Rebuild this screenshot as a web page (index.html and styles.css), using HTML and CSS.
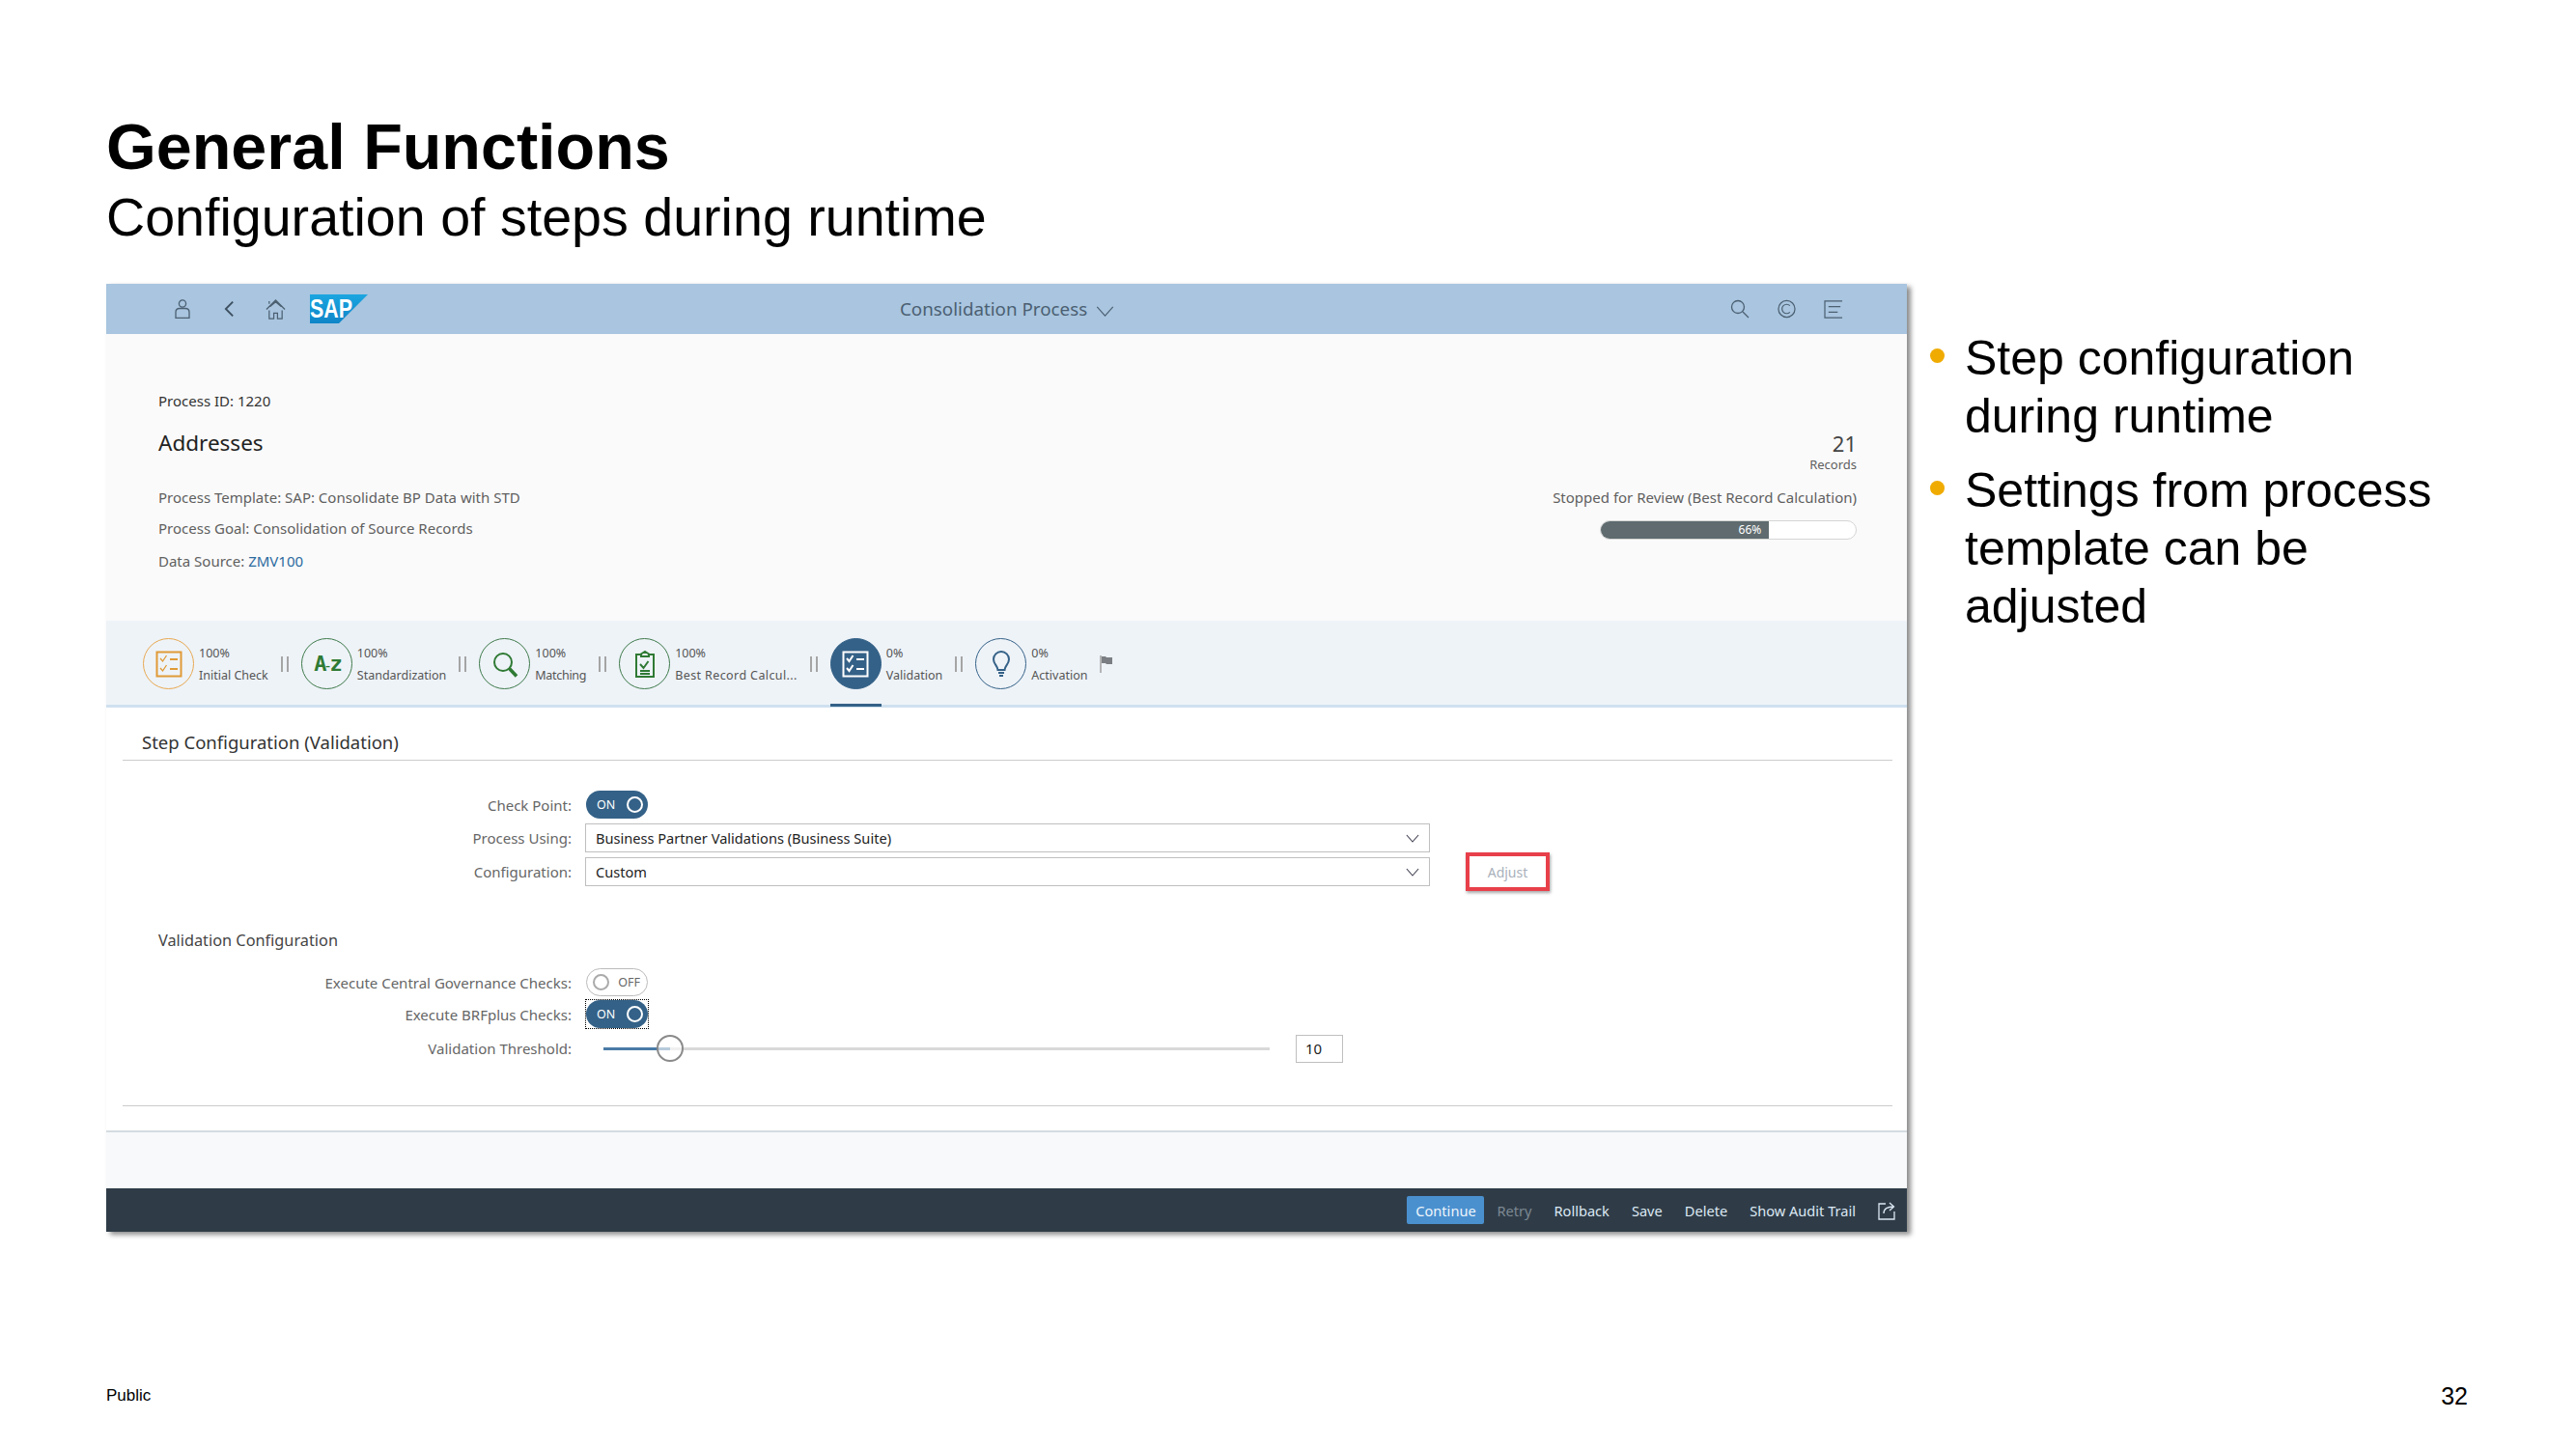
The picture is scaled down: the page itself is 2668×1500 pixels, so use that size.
FILE: index.html
```html
<!DOCTYPE html>
<html lang="en">
<head>
    <meta charset="UTF-8">
    <title>General Functions</title>
    <link rel="stylesheet" href="styles.css">
</head>
<body>
    <div class="slide">
        <h1 class="slide-title">General Functions</h1>
        <p class="slide-subtitle">Configuration of steps during runtime</p>

        <div class="content">
            <div class="panel">
                <div class="shell">
                    <div class="shell-left">
                        <svg class="shell-icon person" viewBox="0 0 16 20"><circle cx="8" cy="4.5" r="3.6"/><path d="M1 19.5v-6q0-4 4-4h6q4 0 4 4v6z"/></svg>
                        <svg class="shell-icon back" viewBox="0 0 12 20"><path d="M10 2L2 10l8 8"/></svg>
                        <svg class="shell-icon home" viewBox="0 0 22 22"><path d="M1 11L11 1l10 10M4 5V2M4 12v9h5v-6h4v6h5v-9M5 8l6-5 6 5"/></svg>
                        <svg class="sap-logo" viewBox="0 0 60 30">
                            <defs><linearGradient id="sapBlue" x1="0" y1="0" x2="0" y2="1"><stop offset="0" stop-color="#1ba6e0"/><stop offset="1" stop-color="#0f85c8"/></linearGradient></defs>
                            <polygon points="0,0 60,0 30,30 0,30" fill="url(#sapBlue)"/>
                            <text x="0" y="24" class="sap-text" textLength="44" lengthAdjust="spacingAndGlyphs">SAP</text>
                        </svg>
                    </div>
                    <div class="shell-title">
                        <span>Consolidation Process</span>
                        <svg class="shell-icon caret" viewBox="0 0 20 12"><path d="M1 1l9 10 9-10"/></svg>
                    </div>
                    <div class="shell-right">
                        <svg class="shell-icon search" viewBox="0 0 20 20"><circle cx="8" cy="8" r="6.5"/><path d="M13 13l6 6"/></svg>
                        <svg class="shell-icon notif" viewBox="0 0 20 20"><circle cx="10" cy="10" r="9"/><path d="M13.5 6.5A5 5 0 1 0 13.5 13.5"/></svg>
                        <svg class="shell-icon menu" viewBox="0 0 22 20"><path d="M20 1H1v18h19M5 7h13M5 13h10"/></svg>
                    </div>
                </div>

                <div class="summary">
                    <div class="summary-left">
                        <div class="process-id">Process ID: 1220</div>
                        <div class="process-name">Addresses</div>
                        <div class="meta meta-template">Process Template: SAP: Consolidate BP Data with STD</div>
                        <div class="meta meta-goal">Process Goal: Consolidation of Source Records</div>
                        <div class="meta meta-source">Data Source: <a class="link">ZMV100</a></div>
                    </div>
                    <div class="summary-right">
                        <div class="record-count">21</div>
                        <div class="record-label">Records</div>
                        <div class="meta meta-status">Stopped for Review (Best Record Calculation)</div>
                        <div class="progress"><div class="progress-fill" style="width:66%">66%</div></div>
                    </div>
                </div>

                <div class="steps">
                    <div class="step">
                        <div class="step-circle warn">
                            <svg viewBox="0 0 28 28"><rect x="1.5" y="1.5" width="25" height="25"/><path class="thin" d="M5 8l2.500 3 4-6M5 18l2.500 3 4-6"/><path d="M15 9h8M15 19h8"/></svg>
                        </div>
                        <div class="step-text"><span>100%</span><span>Initial Check</span></div>
                    </div>
                    <div class="step-sep"></div>
                    <div class="step">
                        <div class="step-circle done"><span class="az">A<small>-</small>z</span></div>
                        <div class="step-text"><span>100%</span><span>Standardization</span></div>
                    </div>
                    <div class="step-sep"></div>
                    <div class="step">
                        <div class="step-circle done">
                            <svg viewBox="0 0 28 28"><circle cx="12" cy="12" r="9"/><path class="heavy" d="M18.500 18.500l7.500 8"/></svg>
                        </div>
                        <div class="step-text"><span>100%</span><span class="tight">Matching</span></div>
                    </div>
                    <div class="step-sep"></div>
                    <div class="step">
                        <div class="step-circle done">
                            <svg viewBox="0 0 28 28"><path d="M10 4H5v23h18V4h-5M10 6V3.500l4-2.500 4 2.500V6zM9 14l3.500 4 5-7M9 21h10M9 24h10"/></svg>
                        </div>
                        <div class="step-text"><span>100%</span><span class="clipped">Best Record Calcul...</span></div>
                    </div>
                    <div class="step-sep"></div>
                    <div class="step current">
                        <div class="step-circle active">
                            <svg viewBox="0 0 28 28"><rect x="1.500" y="1.500" width="25" height="25"/><path d="M5 8l2.500 3 4-6M5 18l2.500 3 4-6M15 9h8M15 19h8"/></svg>
                        </div>
                        <div class="step-text"><span>0%</span><span>Validation</span></div>
                    </div>
                    <div class="step-sep"></div>
                    <div class="step">
                        <div class="step-circle todo">
                            <svg viewBox="0 0 28 28"><path d="M10.500 20c0-4-4.500-6-4.500-11a8 8 0 0 1 16 0c0 5-4.500 7-4.500 11zM11 23h6M12 26h4"/></svg>
                        </div>
                        <div class="step-text"><span>0%</span><span>Activation</span></div>
                    </div>
                    <svg class="flag" viewBox="0 0 14 18"><path class="pole" d="M1 0v18"/><path class="cloth" d="M2 1h4l1 1h6v7H7L6 8H2z"/></svg>
                </div>

                <div class="main">
                    <h2 class="section-title">Step Configuration (Validation)</h2>

                    <div class="form-row first-row">
                        <label>Check Point:</label>
                        <div class="toggle on"><span>ON</span><i></i></div>
                    </div>
                    <div class="form-row">
                        <label>Process Using:</label>
                        <div class="select"><span>Business Partner Validations (Business Suite)</span><svg viewBox="0 0 16 10"><path d="M1 1l7 8 7-8"/></svg></div>
                    </div>
                    <div class="form-row">
                        <label>Configuration:</label>
                        <div class="select"><span>Custom</span><svg viewBox="0 0 16 10"><path d="M1 1l7 8 7-8"/></svg></div>
                        <div class="adjust">Adjust</div>
                    </div>

                    <h3 class="sub-title">Validation Configuration</h3>

                    <div class="form-row toggle-row">
                        <label>Execute Central Governance Checks:</label>
                        <div class="toggle off"><i></i><span>OFF</span></div>
                    </div>
                    <div class="form-row toggle-row">
                        <label>Execute BRFplus Checks:</label>
                        <div class="toggle on focused"><span>ON</span><i></i></div>
                    </div>
                    <div class="form-row slider-row">
                        <label>Validation Threshold:</label>
                        <div class="slider"><div class="slider-fill"></div><div class="slider-knob"></div></div>
                        <div class="threshold">10</div>
                    </div>

                    <div class="main-rule"></div>
                </div>

                <div class="panel-spacer"></div>

                <div class="actions">
                    <button class="primary">Continue</button>
                    <button class="disabled">Retry</button>
                    <button>Rollback</button>
                    <button>Save</button>
                    <button>Delete</button>
                    <button>Show Audit Trail</button>
                    <svg class="share" viewBox="0 0 18 20"><path d="M8 3H1v16h16v-8M6 13c0-5 4-7 10-7M12 2l4.500 4-4.500 4"/></svg>
                </div>
            </div>

            <ul class="bullets">
                <li>Step configuration during runtime</li>
                <li>Settings from process template can be adjusted</li>
            </ul>
        </div>

        <div class="slide-footer">
            <span class="public">Public</span>
            <span class="page-no">32</span>
        </div>
    </div>
</body>
</html>
```

FILE: styles.css
```css
html, body {
    margin: 0;
    padding: 0;
    background: #fff;
}
body {
    font-family: "Liberation Sans", Arial, sans-serif;
    color: #000;
}
.slide {
    width: 2668px;
    height: 1500px;
    box-sizing: border-box;
    padding: 112px 0 0 110px;
    display: flex;
    flex-direction: column;
    overflow: hidden;
}
.slide-title {
    margin: 0;
    font-size: 66.500px;
    line-height: 80px;
    font-weight: bold;
}
.slide-subtitle {
    margin: 0;
    font-size: 55.600px;
    line-height: 66px;
    height: 66px;
}

/* content row */
.content {
    display: flex;
    margin-top: 36px;
}
.panel {
    width: 1865px;
    height: 982px;
    flex: none;
    display: flex;
    flex-direction: column;
    background: #fff;
    box-shadow: 4px 3px 5px rgba(0,0,0,0.45);
    font-family: "Noto Sans", sans-serif;
    font-size: 15px;
    color: #5f5f5f;
}

/* shell bar */
.shell {
    height: 52px;
    flex: none;
    background: #a9c5df;
    display: flex;
    align-items: center;
    position: relative;
    padding: 0 65px 0 71px;
}
.shell-left, .shell-right {
    display: flex;
    align-items: center;
}
.shell-right {
    margin-left: auto;
    gap: 29px;
}
.shell-icon {
    fill: none;
    stroke: #4c6072;
    stroke-width: 1.3;
    display: block;
}
.person { width: 16px; height: 20px; }
.back { width: 11px; height: 20px; margin-left: 35px; stroke-width: 2; stroke: #3d4f60; }
.home { width: 21px; height: 21px; margin-left: 32px; }
.sap-logo { width: 60px; height: 30px; margin-left: 25px; }
.sap-text {
    font-family: "Liberation Sans", sans-serif;
    font-weight: bold;
    font-size: 27px;
    fill: #fff;
}
.shell-title {
    position: absolute;
    left: 822px;
    top: 0;
    height: 52px;
    display: flex;
    align-items: center;
    gap: 9px;
    font-size: 18.800px;
    color: #4b5f72;
}
.caret { width: 19px; height: 11px; margin-top: 4px; }
.search { width: 20px; height: 20px; }
.notif { width: 19px; height: 20px; }
.menu { width: 21px; height: 19px; }

/* process summary */
.summary {
    height: 297px;
    flex: none;
    box-sizing: border-box;
    background: #fafafa;
    display: flex;
    justify-content: space-between;
    padding: 60px 52px 0 54px;
}
.process-id, .meta {
    height: 18px;
    line-height: 18px;
    white-space: nowrap;
}
.process-id { color: #333; }
.process-name {
    height: 30px;
    line-height: 30px;
    margin-top: 20px;
    font-size: 22.500px;
    color: #222;
}
.meta-template { margin-top: 32px; }
.meta-goal { margin-top: 14px; }
.meta-source { margin-top: 16px; }
.link { color: #2b6a9f; }
.summary-right { text-align: right; }
.record-count {
    height: 30px;
    line-height: 30px;
    margin-top: 38px;
    font-size: 22px;
    color: #444;
}
.record-label {
    height: 16px;
    line-height: 16px;
    margin-top: -1px;
    font-size: 13px;
}
.meta-status { margin-top: 17px; }
.progress {
    width: 266px;
    height: 20px;
    margin: 15px 0 0 auto;
    box-sizing: border-box;
    background: #fff;
    border: 1px solid #d5d5d5;
    border-radius: 10px;
    overflow: hidden;
}
.progress-fill {
    height: 100%;
    background: #5f6b6e;
    color: #fff;
    font-size: 12px;
    line-height: 18px;
    text-align: right;
    padding-right: 8px;
    box-sizing: border-box;
}

/* step strip */
.steps {
    height: 90px;
    flex: none;
    box-sizing: border-box;
    background: #eef3f8;
    border-bottom: 3px solid #cfe0ef;
    display: flex;
    align-items: flex-start;
    gap: 13px;
    padding: 18px 0 0 38px;
}
.step {
    display: flex;
    gap: 5px;
    position: relative;
}
.step-circle {
    width: 53px;
    height: 53px;
    box-sizing: border-box;
    border-radius: 50%;
    border: 1.5px solid;
    display: flex;
    align-items: center;
    justify-content: center;
}
.step-circle svg {
    width: 28px;
    height: 28px;
    fill: none;
    stroke: currentColor;
    stroke-width: 2;
}
.step-circle .thin { stroke-width: 1.3; }
.step-circle .heavy { stroke-width: 3.5; }
.warn { color: #e09a37; border-color: #e8a84f; }
.done { color: #2f7a34; border-color: #3e7a4a; }
.todo { color: #346187; border-color: #346187; }
.active { color: #fff; background: #346187; border-color: #346187; }
.current::after {
    content: "";
    position: absolute;
    left: 0;
    width: 53px;
    bottom: -18px;
    height: 3px;
    background: #346187;
}
.az {
    font-family: "DejaVu Sans Mono", monospace;
    font-size: 22px;
    font-weight: bold;
    letter-spacing: -3.500px;
}
.az small { font-size: 15px; font-weight: normal; letter-spacing: -2.500px; }
.step-text {
    display: flex;
    flex-direction: column;
    font-size: 12.500px;
    color: #555;
    white-space: nowrap;
}
.step-text span { height: 18px; line-height: 18px; margin-top: 7px; }
.step-text span + span { margin-top: 5px; }
.step-text .clipped { letter-spacing: 0.400px; }
.step-text .tight { letter-spacing: -0.300px; }
.step-sep {
    width: 8px;
    height: 16px;
    margin-top: 19px;
    box-sizing: border-box;
    border-left: 2.500px solid #a5a5a5;
    border-right: 2.500px solid #a5a5a5;
}
.flag {
    width: 14px;
    height: 18px;
    margin-top: 18px;
}
.flag .pole { stroke: #a5a5a5; stroke-width: 1.6; fill: none; }
.flag .cloth { fill: #7b7f83; }

/* step configuration */
.main {
    height: 438px;
    flex: none;
    box-sizing: border-box;
    background: #fff;
    padding: 0 15px 0 17px;
}
.section-title {
    margin: 0;
    padding: 25px 0 7px 20px;
    height: 22px;
    line-height: 22px;
    box-sizing: content-box;
    font-size: 18.500px;
    font-weight: normal;
    color: #333;
    border-bottom: 1px solid #ccc;
}
.form-row {
    display: flex;
    align-items: center;
    margin-top: 5px;
}
.first-row { margin-top: 31px; }
.form-row label {
    width: 465px;
    flex: none;
    text-align: right;
    color: #666;
    white-space: nowrap;
}
.toggle {
    width: 64px;
    height: 29px;
    margin-left: 15px;
    box-sizing: border-box;
    border-radius: 15px;
    display: flex;
    align-items: center;
    justify-content: space-between;
    padding: 0 5px 0 11px;
    font-size: 12.500px;
    position: relative;
}
.toggle i {
    width: 17px;
    height: 17px;
    border-radius: 50%;
    border: 2px solid;
    box-sizing: border-box;
}
.toggle.on { background: #346187; color: #fff; }
.toggle.off {
    background: #fff;
    color: #666;
    border: 1px solid #bbb;
    padding: 0 7px 0 6px;
}
.toggle.off i { border-color: #aaa; }
.toggle.focused::after {
    content: "";
    position: absolute;
    inset: -1px;
    border: 1px dotted #000;
}
.select {
    width: 875px;
    height: 30px;
    margin-left: 14px;
    box-sizing: border-box;
    border: 1px solid #bfbfbf;
    display: flex;
    align-items: center;
    justify-content: space-between;
    padding: 0 10px;
    color: #222;
    font-size: 14.600px;
}
.select svg {
    width: 14px;
    height: 9px;
    fill: none;
    stroke: #445;
    stroke-width: 1.3;
}
.adjust {
    width: 87px;
    height: 40px;
    margin: -5px 0 -5px 37px;
    box-sizing: border-box;
    border: 4px solid #e8404a;
    box-shadow: 1px 2px 3px rgba(0,0,0,0.35);
    display: flex;
    align-items: center;
    justify-content: center;
    color: #a9b1bb;
    font-size: 14px;
}
.sub-title {
    margin: 46px 0 0 37px;
    height: 20px;
    line-height: 20px;
    font-size: 16.300px;
    font-weight: normal;
    color: #444;
}
.toggle-row { margin-top: 4px; }
.sub-title + .toggle-row { margin-top: 19px; }
.slider-row { margin-top: 3px; height: 36px; }
.slider {
    width: 690px;
    height: 3px;
    margin-left: 33px;
    background: #d9d9d9;
    position: relative;
}
.slider-fill {
    width: 69px;
    height: 100%;
    background: #4a7ba6;
}
.slider-knob {
    position: absolute;
    left: 55px;
    top: -13px;
    width: 28px;
    height: 28px;
    box-sizing: border-box;
    border: 2px solid #8a8a8a;
    border-radius: 50%;
    background: rgba(255,255,255,0.6);
}
.threshold {
    width: 49px;
    height: 29px;
    margin-left: 27px;
    box-sizing: border-box;
    border: 1px solid #bfbfbf;
    line-height: 27px;
    padding-left: 9px;
    color: #222;
}
.main-rule {
    height: 1px;
    background: #ccc;
    margin-top: 41px;
}
.panel-spacer {
    height: 60px;
    flex: none;
    box-sizing: border-box;
    background: #f8f9fa;
    border-top: 2px solid #d5dbe0;
}

/* action bar */
.actions {
    height: 45px;
    flex: none;
    background: #2f3c48;
    display: flex;
    align-items: center;
    justify-content: flex-end;
    gap: 23px;
    padding-right: 12px;
}
.actions button {
    border: none;
    background: none;
    padding: 0;
    font-family: "Noto Sans", sans-serif;
    font-size: 14.600px;
    color: #dce8f3;
}
.actions .primary {
    width: 80px;
    height: 29px;
    background: #4a90cf;
    border-radius: 2px;
    color: #eef5fb;
    margin-right: -10px;
}
.actions .disabled { color: #7d8892; }
.share {
    width: 18px;
    height: 20px;
    fill: none;
    stroke: #dce8f3;
    stroke-width: 1.3;
}

/* bullets on the right */
.bullets {
    list-style: none;
    margin: 47px 0 0 60px;
    padding: 0;
    width: 520px;
    font-size: 50px;
    line-height: 60px;
}
.bullets li {
    position: relative;
    margin-bottom: 17px;
}
.bullets li::before {
    content: "";
    position: absolute;
    left: -36px;
    top: 20px;
    width: 15px;
    height: 15px;
    border-radius: 50%;
    background: #f0ab00;
}

/* slide footer */
.slide-footer {
    position: absolute;
    left: 110px;
    right: 112px;
    top: 1434px;
    display: flex;
    justify-content: space-between;
    align-items: center;
    height: 24px;
}
.public { font-size: 17px; }
.page-no { font-size: 25px; }
```
